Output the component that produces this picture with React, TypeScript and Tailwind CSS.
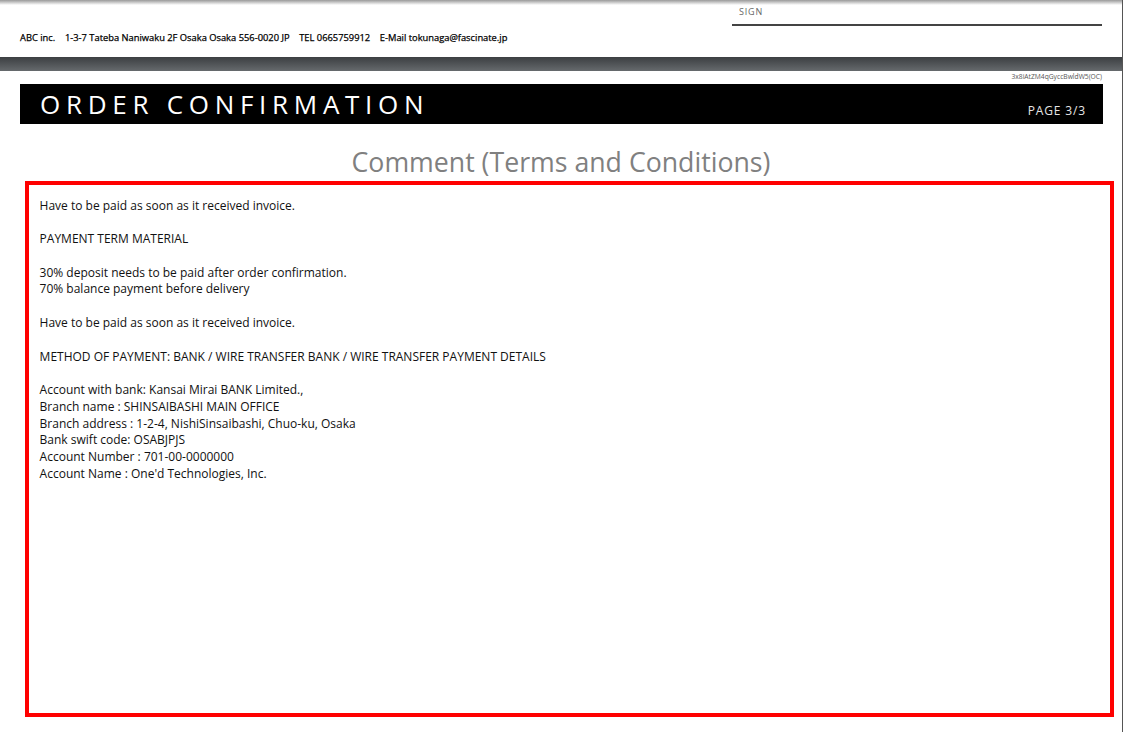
export default function App() {
  const sans = "font-['Open_Sans',sans-serif]";
  const lines = [
    "Have to be paid as soon as it received invoice.",
    "",
    "PAYMENT TERM MATERIAL",
    "",
    "30% deposit needs to be paid after order confirmation.",
    "70% balance payment before delivery",
    "",
    "Have to be paid as soon as it received invoice.",
    "",
    "METHOD OF PAYMENT: BANK / WIRE TRANSFER BANK / WIRE TRANSFER PAYMENT DETAILS",
    "",
    "Account with bank: Kansai Mirai BANK Limited.,",
    "Branch name : SHINSAIBASHI MAIN OFFICE",
    "Branch address : 1-2-4, NishiSinsaibashi, Chuo-ku, Osaka",
    "Bank swift code: OSABJPJS",
    "Account Number : 701-00-0000000",
    "Account Name : One'd Technologies, Inc.",
  ];
  return (
    <div className={`${sans} h-[732px] w-[1123px] overflow-hidden bg-white border-r border-[#555555]`}>
      <div className="h-[5px] bg-gradient-to-b from-[#9a9a9a] to-white" />
      <div className="flex h-[52px] justify-between pl-[20px] pr-[20px]">
        <div className="pt-[26px] text-[9.33px] leading-[13px] font-medium text-black whitespace-pre [-webkit-text-stroke:0.25px_black]">
          {"ABC inc.    1-3-7 Tateba Naniwaku 2F Osaka Osaka 556-0020 JP    TEL 0665759912    E-Mail tokunaga@fascinate.jp"}
        </div>
        <div className="h-[21px] w-[370px] border-b-2 border-[#444444] pl-[7px] text-[9px] leading-[13px] tracking-[0.8px] text-[#666666]">
          SIGN
        </div>
      </div>
      <div className="h-[14px] bg-gradient-to-b from-[#3c3f42] to-[#666a6d]" />
      <div className="flex h-[13px] items-center justify-end pr-[20px] text-[6.7px] text-[#555555]">3x8iAtZM4qGyccBwldW5(OC)</div>
      <div className="ml-[20px] mr-[19px] flex h-[40px] items-center justify-between bg-black pl-[20px] pr-[17px] text-white">
        <span className="text-[26px] leading-[40px] tracking-[5.71px]">ORDER CONFIRMATION</span>
        <span className="pt-[13px] text-[12px] tracking-[0.85px] text-[#e5e5e5]">PAGE 3/3</span>
      </div>
      <h1 className="mt-[20px] h-[37px] text-center text-[26.7px] leading-[36px] text-[#808080]">Comment (Terms and Conditions)</h1>
      <div className="ml-[25px] box-border h-[536px] w-[1089px] border-4 border-[#ff0000] pl-[10.6px] pt-[12.52px] text-[12px] leading-[16.8px] text-[#111111]">
        {lines.map((l, i) => (
          <div key={i} className="h-[16.795px] whitespace-pre">{l}</div>
        ))}
      </div>
    </div>
  );
}
